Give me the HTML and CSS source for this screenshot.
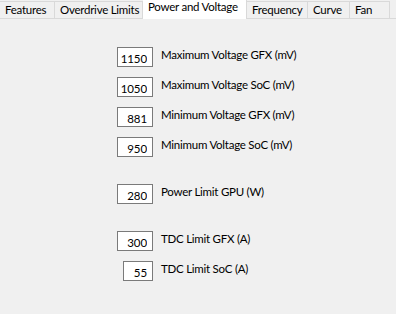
FILE: index.html
```html
<!DOCTYPE html>
<html>
  <head>
    <title>Power and Voltage</title>
    <meta charset="UTF-8">
    <link rel="stylesheet" href="styles.css">
  </head>
  <body>
    <div class="tabs">
      <div class="tab" style="width: 55px">Features</div>
      <div class="tab" style="width: 88px">Overdrive Limits</div>
      <div class="tab active" style="width: 104px">Power and Voltage</div>
      <div class="tab" style="width: 61px">Frequency</div>
      <div class="tab" style="width: 42px">Curve</div>
      <div class="tab" style="width: 40px">Fan</div>
    </div>

    <div class="panel">
      <div class="field first">
        <span class="cell"><input class="value" value="1150"></span>
        <label>Maximum Voltage GFX (mV)</label>
      </div>
      <div class="field">
        <span class="cell"><input class="value" value="1050"></span>
        <label>Maximum Voltage SoC (mV)</label>
      </div>
      <div class="field">
        <span class="cell"><input class="value" value="881"></span>
        <label>Minimum Voltage GFX (mV)</label>
      </div>
      <div class="field">
        <span class="cell"><input class="value" value="950"></span>
        <label>Minimum Voltage SoC (mV)</label>
      </div>
      <div class="field group">
        <span class="cell"><input class="value" value="280"></span>
        <label>Power Limit GPU (W)</label>
      </div>
      <div class="field group">
        <span class="cell"><input class="value" value="300"></span>
        <label>TDC Limit GFX (A)</label>
      </div>
      <div class="field">
        <span class="cell"><input class="value small" value="55"></span>
        <label>TDC Limit SoC (A)</label>
      </div>
    </div>
  </body>
</html>
```

FILE: styles.css
```css
html, body {
  width: 100%;
  height: 100%;
  margin: 0px;
  padding: 0px;
}

body {
  background-color: #f0f0f0;
  font-family: Lato, "Liberation Sans", sans-serif;
  font-size: 11.5px;
  letter-spacing: -0.25px;
  color: #000;
}

.tabs {
  display: flex;
  align-items: flex-end;
  height: 19px;
  border-bottom: 1px solid #d9d9d9;
  box-sizing: border-box;
}

.tab {
  box-sizing: border-box;
  height: 17px;
  line-height: 15px;
  padding-left: 5px;
  border: 1px solid #d9d9d9;
  border-left: none;
  border-bottom: none;
  white-space: nowrap;
  overflow: hidden;
}

.tab.active {
  height: 20px;
  margin-bottom: -1px;
  background-color: #fff;
  line-height: 14px;
  padding-left: 5px;
}

.panel {
  padding-top: 28px;
}

.field {
  display: grid;
  grid-template-columns: 153px auto;
  column-gap: 8px;
  align-items: start;
  margin-top: 10px;
}

.field.first {
  margin-top: 0px;
}

.field.group {
  margin-top: 27px;
}

.cell {
  display: flex;
  justify-content: flex-end;
}

.value {
  box-sizing: border-box;
  width: 36px;
  height: 20px;
  margin: 0px;
  padding: 2px 5px 0px 0px;
  border: 1px solid #7a7a7a;
  background-color: #fff;
  font-family: inherit;
  font-size: 11.5px;
  letter-spacing: -0.1px;
  text-align: right;
  color: #000;
}

.value.small {
  width: 30px;
}

label {
  line-height: 16px;
}
```
